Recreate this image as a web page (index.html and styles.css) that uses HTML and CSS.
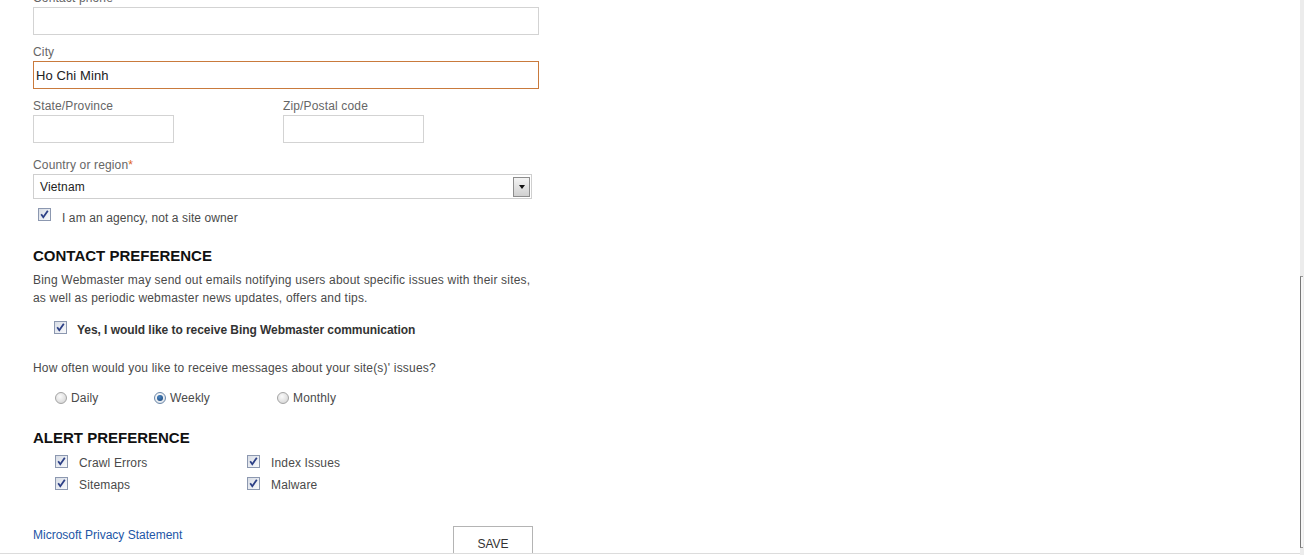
FILE: index.html
```html
<!DOCTYPE html>
<html>
<head>
<meta charset="utf-8">
<link rel="stylesheet" href="styles.css">
</head>
<body>
<div class="page">
  <div class="form">
    <div class="field field-first">
      <div class="label">Contact phone</div>
      <input class="text wide" type="text" value="">
    </div>
    <div class="field">
      <div class="label">City</div>
      <input class="text wide focus" type="text" value="Ho Chi Minh">
    </div>
    <div class="field-row">
      <div class="col">
        <div class="label">State/Province</div>
        <input class="text short" type="text" value="">
      </div>
      <div class="col">
        <div class="label">Zip/Postal code</div>
        <input class="text short" type="text" value="">
      </div>
    </div>
    <div class="field-select">
      <div class="label">Country or region<span class="req">*</span></div>
      <div class="select">
        <span class="select-value">Vietnam</span>
        <span class="select-btn"><span class="tri"></span></span>
      </div>
    </div>
    <div class="check-row agency">
      <span class="cb"><svg viewBox="0 0 13 13" width="13" height="13"><path d="M3.2 6.3 L5.3 9.2 L9.8 2.8" fill="none" stroke="#2c3f86" stroke-width="1.8"/></svg></span>
      <span class="cb-text">I am an agency, not a site owner</span>
    </div>

    <h2 class="section contact">CONTACT PREFERENCE</h2>
    <p class="desc">Bing Webmaster may send out emails notifying users about specific issues with their sites, as well as periodic webmaster news updates, offers and tips.</p>
    <div class="check-row yes">
      <span class="cb"><svg viewBox="0 0 13 13" width="13" height="13"><path d="M3.2 6.3 L5.3 9.2 L9.8 2.8" fill="none" stroke="#2c3f86" stroke-width="1.8"/></svg></span>
      <span class="cb-text bold">Yes, I would like to receive Bing Webmaster communication</span>
    </div>
    <div class="question">How often would you like to receive messages about your site(s)' issues?</div>
    <div class="radios">
      <div class="radio-item daily"><span class="radio"></span><span class="radio-text">Daily</span></div>
      <div class="radio-item weekly"><span class="radio checked"><span class="dot"></span></span><span class="radio-text">Weekly</span></div>
      <div class="radio-item"><span class="radio"></span><span class="radio-text">Monthly</span></div>
    </div>

    <h2 class="section alert">ALERT PREFERENCE</h2>
    <div class="alerts">
      <div class="alert-item"><span class="cb"><svg viewBox="0 0 13 13" width="13" height="13"><path d="M3.2 6.3 L5.3 9.2 L9.8 2.8" fill="none" stroke="#2c3f86" stroke-width="1.8"/></svg></span><span class="alert-text">Crawl Errors</span></div>
      <div class="alert-item"><span class="cb"><svg viewBox="0 0 13 13" width="13" height="13"><path d="M3.2 6.3 L5.3 9.2 L9.8 2.8" fill="none" stroke="#2c3f86" stroke-width="1.8"/></svg></span><span class="alert-text">Index Issues</span></div>
      <div class="alert-item"><span class="cb"><svg viewBox="0 0 13 13" width="13" height="13"><path d="M3.2 6.3 L5.3 9.2 L9.8 2.8" fill="none" stroke="#2c3f86" stroke-width="1.8"/></svg></span><span class="alert-text">Sitemaps</span></div>
      <div class="alert-item"><span class="cb"><svg viewBox="0 0 13 13" width="13" height="13"><path d="M3.2 6.3 L5.3 9.2 L9.8 2.8" fill="none" stroke="#2c3f86" stroke-width="1.8"/></svg></span><span class="alert-text">Malware</span></div>
    </div>

    <div class="footer">
      <a class="privacy" href="#">Microsoft Privacy Statement</a>
      <button class="save" type="button">SAVE</button>
    </div>
  </div>
  <div class="bottom-line"></div>
</div>
<div class="scrollbar"><div class="thumb"></div></div>
</body>
</html>
```

FILE: styles.css
```css
html, body {
  margin: 0;
  padding: 0;
  overflow: hidden;
  background: #ffffff;
}
body {
  font-family: "Liberation Sans", Arial, sans-serif;
  font-size: 12px;
  letter-spacing: 0.15px;
  color: #4a4a4a;
}
.page {
  width: 1300px;
}
.form {
  padding-left: 33px;
  width: 506px;
  margin-top: -9px;
}
.label {
  font-size: 12px;
  line-height: 14px;
  color: #666;
  margin-bottom: 2px;
}
.req {
  color: #e0641c;
}
.field {
  margin-bottom: 10px;
}
.text {
  display: block;
  box-sizing: border-box;
  height: 28px;
  margin: 0;
  border: 1px solid #d3d3d3;
  padding: 1px 2px 0 2px;
  font-family: "Liberation Sans", Arial, sans-serif;
  font-size: 13px;
  letter-spacing: 0.1px;
  color: #222;
  background: #fff;
  outline: none;
}
.text.wide {
  width: 506px;
}
.text.short {
  width: 141px;
}
.text.focus {
  border-color: #c97a3c;
}
.field-row {
  display: grid;
  grid-template-columns: 250px 256px;
  margin-bottom: 15px;
}
.select {
  box-sizing: border-box;
  width: 499px;
  height: 25px;
  border: 1px solid #cfcfcf;
  display: flex;
  align-items: center;
  justify-content: space-between;
  padding: 0 1px 0 6px;
  background: #fff;
}
.select-value {
  font-size: 12px;
  color: #222;
  line-height: 14px;
  margin-top: 1px;
}
.select-btn {
  box-sizing: border-box;
  width: 17px;
  height: 20px;
  border: 1px solid #8d8d8d;
  background: linear-gradient(#f4f4f4, #d0d0d0);
  display: flex;
  align-items: center;
  justify-content: center;
}
.tri {
  width: 0;
  height: 0;
  border-left: 3px solid transparent;
  border-right: 3px solid transparent;
  border-top: 4px solid #111;
}
.check-row {
  display: flex;
  align-items: flex-start;
}
.cb {
  box-sizing: border-box;
  width: 13px;
  height: 13px;
  border: 1px solid #8c98b0;
  background: linear-gradient(135deg, #d8dde6, #f8f9fb);
  display: block;
  flex: none;
  position: relative;
}
.cb svg {
  display: block;
  margin: -1px 0 0 -1px;
}
.cb-text {
  line-height: 14px;
  margin-top: 3px;
}
.agency {
  margin-top: 9px;
  padding-left: 5px;
}
.agency .cb-text {
  margin-left: 11px;
  letter-spacing: 0.1px;
}
.section {
  margin: 0;
  font-size: 15px;
  line-height: 18px;
  font-weight: bold;
  letter-spacing: 0;
  color: #111;
}
.contact {
  margin-top: 22px;
}
.desc {
  margin: 6px 0 0 0;
  line-height: 18px;
  letter-spacing: 0.2px;
}
.yes {
  margin-top: 14px;
  padding-left: 21px;
}
.yes .cb-text {
  margin-top: 2px;
  margin-left: 10px;
  font-weight: bold;
  letter-spacing: -0.05px;
  color: #333;
}
.question {
  margin-top: 24px;
  line-height: 14px;
  letter-spacing: 0.2px;
}
.radios {
  margin-top: 16px;
  display: flex;
  padding-left: 22px;
}
.radio-item {
  display: flex;
  align-items: flex-start;
}
.radio-item.daily {
  width: 99px;
}
.radio-item.weekly {
  width: 123px;
}
.radio {
  box-sizing: border-box;
  width: 12px;
  height: 12px;
  border-radius: 50%;
  border: 1px solid #a4a4a4;
  background: radial-gradient(circle at 40% 35%, #fafafa, #cfcfcf);
  margin-top: 1px;
  display: flex;
  align-items: center;
  justify-content: center;
  flex: none;
}
.radio.checked {
  border-color: #6b87a8;
  background: radial-gradient(circle at 40% 35%, #ffffff, #d6dde6);
}
.dot {
  width: 6px;
  height: 6px;
  border-radius: 50%;
  background: radial-gradient(circle at 40% 35%, #4b86c4, #143e6e);
}
.radio-text {
  margin-left: 4px;
  line-height: 14px;
}
.alert {
  margin-top: 24px;
}
.alerts {
  margin-top: 8px;
  padding-left: 22px;
  display: grid;
  grid-template-columns: 192px 200px;
  grid-auto-rows: 22px;
}
.alert-item {
  display: flex;
  align-items: flex-start;
}
.alert-text {
  margin-left: 11px;
  line-height: 14px;
  margin-top: 1px;
}
.footer {
  margin-top: 27px;
  width: 500px;
  display: flex;
  justify-content: space-between;
  align-items: flex-start;
}
.privacy {
  margin-top: 2px;
  line-height: 14px;
  letter-spacing: 0;
  color: #2356a6;
  text-decoration: none;
}
.save {
  box-sizing: border-box;
  width: 80px;
  height: 27px;
  margin: 0;
  padding: 10px 0 2px 0;
  border: 1px solid #b4b4b4;
  border-bottom: none;
  background: #fff;
  font-family: "Liberation Sans", Arial, sans-serif;
  font-size: 12px;
  line-height: 14px;
  color: #333;
}
.bottom-line {
  height: 1px;
  background: #dcdcdc;
  width: 1300px;
}
.scrollbar {
  position: fixed;
  top: 0;
  right: 0;
  width: 4px;
  height: 555px;
  background: #ececec;
}
.thumb {
  position: absolute;
  left: 0;
  top: 276px;
  width: 3px;
  height: 272px;
  box-sizing: border-box;
  border-left: 1px solid #777;
  border-top: 1px solid #999;
  border-bottom: 1px solid #999;
  background: #f6f6f6;
}
```
